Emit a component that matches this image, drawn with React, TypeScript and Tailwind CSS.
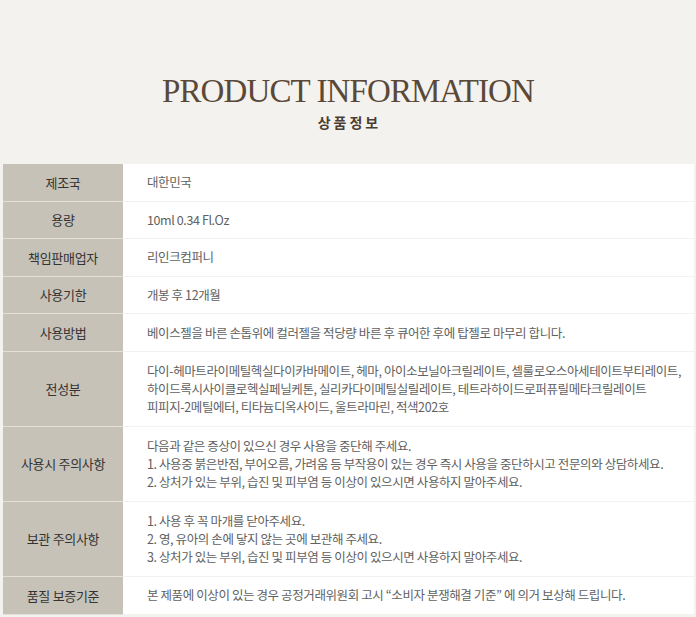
const ROWS: { label: string; lines: string[] }[] = [
  { label: '제조국', lines: ['대한민국'] },
  { label: '용량', lines: ['10ml 0.34 Fl.Oz'] },
  { label: '책임판매업자', lines: ['리인크컴퍼니'] },
  { label: '사용기한', lines: ['개봉 후 12개월'] },
  { label: '사용방법', lines: ['베이스젤을 바른 손톱위에 컬러젤을 적당량 바른 후 큐어한 후에 탑젤로 마무리 합니다.'] },
  {
    label: '전성분',
    lines: [
      '다이-헤마트라이메틸헥실다이카바메이트, 헤마, 아이소보닐아크릴레이트, 셀룰로오스아세테이트부티레이트,',
      '하이드록시사이클로헥실페닐케톤, 실리카다이메틸실릴레이트, 테트라하이드로퍼퓨릴메타크릴레이트',
      '피피지-2메틸에터, 티타늄디옥사이드, 울트라마린, 적색202호',
    ],
  },
  {
    label: '사용시 주의사항',
    lines: [
      '다음과 같은 증상이 있으신 경우 사용을 중단해 주세요.',
      '1. 사용중 붉은반점, 부어오름, 가려움 등 부작용이 있는 경우 즉시 사용을 중단하시고 전문의와 상담하세요.',
      '2. 상처가 있는 부위, 습진 및 피부염 등 이상이 있으시면 사용하지 말아주세요.',
    ],
  },
  {
    label: '보관 주의사항',
    lines: [
      '1. 사용 후 꼭 마개를 닫아주세요.',
      '2. 영, 유아의 손에 닿지 않는 곳에 보관해 주세요.',
      '3. 상처가 있는 부위, 습진 및 피부염 등 이상이 있으시면 사용하지 말아주세요.',
    ],
  },
  { label: '품질 보증기준', lines: ['본 제품에 이상이 있는 경우 공정거래위원회 고시 “소비자 분쟁해결 기준” 에 의거 보상해 드립니다.'] },
]

export default function App() {
  return (
    <div className="w-[696px] h-[617px] bg-[#f4f2ee] overflow-hidden font-['Noto_Sans_CJK_KR',sans-serif]">
      {/* title */}
      <div className="h-[164px] flex flex-col items-center pt-[72px]">
        <h1 className="font-['Liberation_Serif',serif] text-[33px] leading-[38px] tracking-[-0.9px] text-[#5a4838] font-normal">
          PRODUCT INFORMATION
        </h1>
        <p className="mt-[2px] text-[14px] leading-[20px] font-bold tracking-[3px] text-[#4a3e34] pl-[3px]">상품정보</p>
      </div>

      {/* table */}
      <div className="ml-[3px] w-[691px]">
        {ROWS.map((r, i) => (
          <div key={i} className={`flex ${r.lines.length > 1 ? 'h-[75px]' : 'h-[37.6px]'}`}>
            <div className="w-[120px] shrink-0 bg-[#c7c2b8] border-b-[1.5px] border-[#e3e0d9] flex items-center justify-center text-[13px] text-[#333] tracking-[-0.3px]">
              {r.label}
            </div>
            <div className="flex-1 bg-white border-b-[1.5px] border-[#f3f2ee] flex flex-col justify-center pl-[24px] text-[12.5px] leading-[18px] text-[#616161] tracking-[-0.4px]">
              {r.lines.map((l, j) => (
                <div key={j} className="whitespace-nowrap">{l}</div>
              ))}
            </div>
          </div>
        ))}
      </div>
    </div>
  )
}
